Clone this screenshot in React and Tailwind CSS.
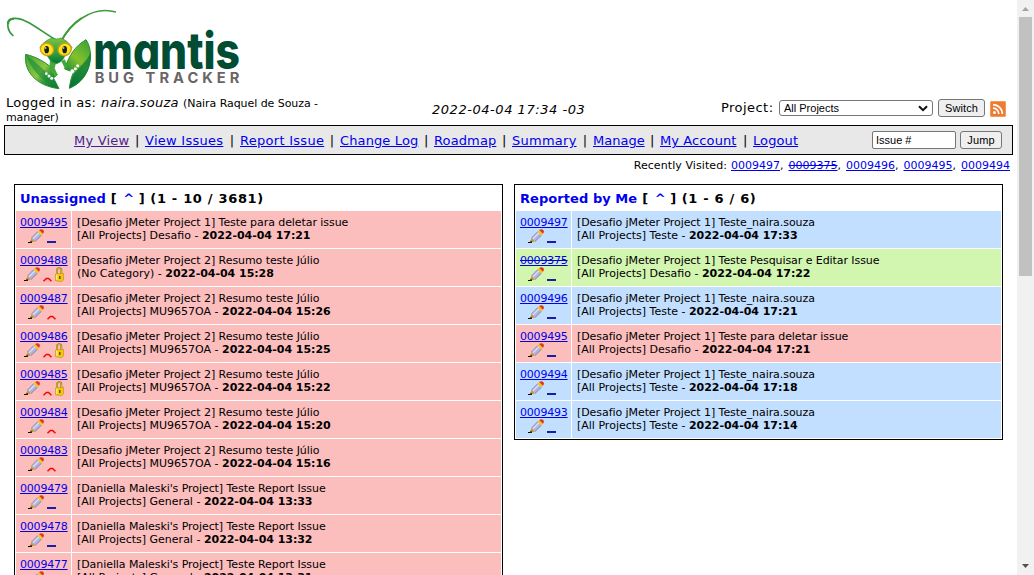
import React from 'react';

const unassigned = [
  ['0009495', '[Desafio jMeter Project 1] Teste para deletar issue', '[All Projects] Desafio', '2022-04-04 17:21', 'normal'],
  ['0009488', '[Desafio jMeter Project 2] Resumo teste Júlio', '(No Category)', '2022-04-04 15:28', 'high', true],
  ['0009487', '[Desafio jMeter Project 2] Resumo teste Júlio', '[All Projects] MU9657OA', '2022-04-04 15:26', 'high'],
  ['0009486', '[Desafio jMeter Project 2] Resumo teste Júlio', '[All Projects] MU9657OA', '2022-04-04 15:25', 'high', true],
  ['0009485', '[Desafio jMeter Project 2] Resumo teste Júlio', '[All Projects] MU9657OA', '2022-04-04 15:22', 'high', true],
  ['0009484', '[Desafio jMeter Project 2] Resumo teste Júlio', '[All Projects] MU9657OA', '2022-04-04 15:20', 'high'],
  ['0009483', '[Desafio jMeter Project 2] Resumo teste Júlio', '[All Projects] MU9657OA', '2022-04-04 15:16', 'high'],
  ['0009479', "[Daniella Maleski's Project] Teste Report Issue", '[All Projects] General', '2022-04-04 13:33', 'normal'],
  ['0009478', "[Daniella Maleski's Project] Teste Report Issue", '[All Projects] General', '2022-04-04 13:32', 'normal'],
  ['0009477', "[Daniella Maleski's Project] Teste Report Issue", '[All Projects] General', '2022-04-04 13:31', 'normal'],
].map(([id, title, category, date, priority, locked]) => ({ id, title, category, date, priority, locked, color: 'bg-[#fcbdbd]' }));

const reported = [
  { id: '0009497', title: '[Desafio jMeter Project 1] Teste_naira.souza', category: '[All Projects] Teste', date: '2022-04-04 17:33', color: 'bg-[#c2dfff]' },
  { id: '0009375', title: '[Desafio jMeter Project 1] Teste Pesquisar e Editar Issue', category: '[All Projects] Desafio', date: '2022-04-04 17:22', color: 'bg-[#d2f5b0]', resolved: true },
  { id: '0009496', title: '[Desafio jMeter Project 1] Teste_naira.souza', category: '[All Projects] Teste', date: '2022-04-04 17:21', color: 'bg-[#c2dfff]' },
  { id: '0009495', title: '[Desafio jMeter Project 1] Teste para deletar issue', category: '[All Projects] Desafio', date: '2022-04-04 17:21', color: 'bg-[#fcbdbd]' },
  { id: '0009494', title: '[Desafio jMeter Project 1] Teste_naira.souza', category: '[All Projects] Teste', date: '2022-04-04 17:18', color: 'bg-[#c2dfff]' },
  { id: '0009493', title: '[Desafio jMeter Project 1] Teste_naira.souza', category: '[All Projects] Teste', date: '2022-04-04 17:14', color: 'bg-[#c2dfff]' },
];

const menu = [
  ['My View', 'w-[71px] tracking-[0.2px]', 'text-[#551a8b]'],
  ['View Issues', 'w-[95px] tracking-[0.27px]', 'text-[#0000ee]'],
  ['Report Issue', 'w-[100px] tracking-[0.28px]', 'text-[#0000ee]'],
  ['Change Log', 'w-[94px] tracking-[0.12px]', 'text-[#0000ee]'],
  ['Roadmap', 'w-[78px] tracking-[0.12px]', 'text-[#0000ee]'],
  ['Summary', 'w-[81px] tracking-[0.25px]', 'text-[#0000ee]'],
  ['Manage', 'w-[67px]', 'text-[#0000ee]'],
  ['My Account', 'w-[93px] tracking-[0.1px]', 'text-[#0000ee]'],
  ['Logout', 'w-[46px] tracking-[0.1px]', 'text-[#0000ee]'],
];

const visited = ['0009497', '0009375', '0009496', '0009495', '0009494'];

function Logo() {
  return (
    <svg className="block h-[95px] w-[260px] shrink-0" viewBox="0 0 780 285">
      <defs>
        <linearGradient id="armL" x1="0" y1="0" x2="1" y2="0.9">
          <stop offset="0" stopColor="#3fa535" />
          <stop offset="0.5" stopColor="#8cc63f" />
          <stop offset="0.7" stopColor="#2f9a3a" />
          <stop offset="1" stopColor="#00702f" />
        </linearGradient>
        <linearGradient id="armR" x1="0.8" y1="0" x2="0.3" y2="1">
          <stop offset="0" stopColor="#3fa535" />
          <stop offset="0.45" stopColor="#86c12c" />
          <stop offset="0.7" stopColor="#3a9d35" />
          <stop offset="1" stopColor="#006b2d" />
        </linearGradient>
        <linearGradient id="head" x1="0" y1="0" x2="0" y2="1">
          <stop offset="0" stopColor="#7cc242" />
          <stop offset="0.6" stopColor="#2f9e3c" />
          <stop offset="1" stopColor="#007536" />
        </linearGradient>
      </defs>
      <path d="M40 108C20 90 17 62 38 56C75 47 135 105 180 126" fill="none" stroke="#35983c" strokeWidth="5" />
      <path d="M25 72C22 62 30 55 42 56" fill="none" stroke="#35983c" strokeWidth="6" />
      <path d="M182 126C208 76 272 14 348 36" fill="none" stroke="#3f9b3c" strokeWidth="4.5" />
      <path d="M182 126C195 101 217 72 245 54" fill="none" stroke="#3f9b3c" strokeWidth="6" />
      <path d="M77 163C70 212 108 258 177 266C170 252 165 242 160 234L172 224L156 204C135 186 108 170 77 163Z" fill="url(#armL)" stroke="#2f8f34" strokeWidth="3" />
      <path d="M77 163C92 205 122 245 177 266C164 240 137 212 77 163Z" fill="#19883a" opacity="0.6" />
      <path d="M150 178L168 190L164 205L173 224L166 230L148 208Z" fill="#46ab38" />
      <path d="M258 119C284 156 275 238 208 265C211 245 214 230 220 219L208 212L194 207C206 168 225 138 258 119Z" fill="url(#armR)" stroke="#2f8f34" strokeWidth="3" />
      <path d="M272 157C276 205 252 248 208 265C211 243 218 225 236 206C250 190 264 177 272 157Z" fill="#07783a" opacity="0.75" />
      <path d="M184 184L194 178L203 198L196 208Z" fill="#3fa93a" />
      <g fill="#fff">
        <circle cx="139" cy="221" r="4" />
        <circle cx="147" cy="228" r="4.5" />
        <circle cx="155" cy="235" r="4.5" />
        <circle cx="233" cy="197" r="4.5" />
        <circle cx="226" cy="206" r="4.5" />
        <circle cx="217" cy="214" r="6" />
      </g>
      <path d="M120 142C130 126 146 117 156 114C164 118 174 118 181 114C194 118 207 127 216 143C212 157 203 166 194 169C190 180 181 188 170 191C156 188 148 180 143 169C131 164 123 155 120 142Z" fill="url(#head)" stroke="#2d9237" strokeWidth="2" />
      <ellipse cx="141" cy="148" rx="20" ry="18" fill="#fde616" stroke="#d89b18" strokeWidth="4" transform="rotate(25 141 148)" />
      <ellipse cx="194" cy="148" rx="20" ry="18" fill="#fde616" stroke="#d89b18" strokeWidth="4" transform="rotate(-25 194 148)" />
      <ellipse cx="140" cy="149" rx="7" ry="11" fill="#17201a" />
      <ellipse cx="194" cy="149" rx="7" ry="11" fill="#17201a" />
      <circle cx="137" cy="144" r="2.5" fill="#fff" />
      <circle cx="191" cy="144" r="2.5" fill="#fff" />
      <text x="280" y="208" textLength="440" lengthAdjust="spacingAndGlyphs" className="[font-feature-settings:'cv11'] font-[Inter,sans-serif] text-[152px] font-extrabold" fill="#004d33">mantis</text>
      <text x="284" y="248" textLength="434" className="font-[Inter,sans-serif] text-[44px] font-bold" fill="#6a6565">BUG TRACKER</text>
    </svg>
  );
}

function Pencil() {
  return (
    <svg className="h-[15px] w-4 shrink-0" viewBox="0 0 16 15">
      <path d="M0 13.5H4" stroke="#000" strokeWidth="1" />
      <path d="M2.4 13.4L3.4 8.8L7.2 12.4Z" fill="#c99a2a" />
      <path d="M2 13.8L2.7 11.6L4.2 13Z" fill="#2b1c04" />
      <path d="M3.3 9L9.6 2.4L13.6 6.2L7 12.6Z" fill="#b3b4de" />
      <path d="M3.4 9L9.6 2.5" stroke="#85889f" strokeWidth="0.7" />
      <path d="M7 12.5L13.5 6.2" stroke="#74769c" strokeWidth="0.8" />
      <path d="M5.2 9.6L11 3.9" stroke="#dfe0fa" strokeWidth="1.3" />
      <path d="M9.4 2.6L11.2 0.9L15 4.6L13.3 6.4Z" fill="#f7c51d" />
      <path d="M11.1 1.1C12.4 -0.3 14.6 0 15.5 1.2C16.2 2.3 15.9 3.8 14.9 4.8Z" fill="#dc3a20" />
    </svg>
  );
}

function Lock() {
  return (
    <svg className="h-[15px] w-[9px] shrink-0" viewBox="0 0 9 15">
      <path d="M2 8V3.2C2 0.4 6.3 0.4 6.3 3.2V7" fill="none" stroke="#9a7410" strokeWidth="1.9" />
      <path d="M2 8V3.2C2 0.8 6.3 0.8 6.3 3.2V7" fill="none" stroke="#e8d060" strokeWidth="0.8" />
      <path d="M0.5 7L8.5 6.4V13L6.5 14.5L0.5 13.8Z" fill="#f4c80e" stroke="#c8960a" strokeWidth="0.7" />
      <path d="M1.8 7.6V13" stroke="#fff08a" strokeWidth="1.2" />
      <path d="M4.8 9V12" stroke="#5c4300" strokeWidth="1.4" />
    </svg>
  );
}

function Priority({ level }) {
  if (level === 'high') {
    return (
      <svg className="h-[5px] w-[9px] shrink-0" viewBox="0 0 9 5">
        <path d="M0.5 4.2L3.4 1.5H5.6L8.5 4.2" fill="none" stroke="#ff0000" strokeWidth="1.5" />
      </svg>
    );
  }
  return <span className="mb-px h-[2px] w-[9px] shrink-0 bg-[#1c1ca8]" />;
}

function Issue({ id, title, category, date, priority = 'normal', locked, color, resolved }) {
  return (
    <li className="flex h-[37px] shrink-0 gap-px">
      <div className={`flex w-[55px] flex-col pt-[5px] pl-1 ${color}`}>
        <a className={`tracking-[-0.2px] text-[#0000ee] ${resolved ? '[text-decoration-line:underline_line-through]' : 'underline'}`}>{id}</a>
        <div className={`flex h-[15px] items-end gap-[3px] ${locked ? 'pl-[4px]' : 'pl-[8px]'}`}>
          <Pencil />
          <Priority level={priority} />
          {locked && <Lock />}
        </div>
      </div>
      <div className={`flex grow flex-col pt-[5px] pl-[5px] ${color}`}>
        <span className="tracking-[-0.07px]">{title}</span>
        <span>
          {category} - <b className="tracking-[-0.04px]">{date}</b>
        </span>
      </div>
    </li>
  );
}

function Panel({ title, range, issues }) {
  return (
    <section className="w-[489px] border border-black p-px">
      <h2 className="flex h-[25px] pt-[5px] pl-1 text-[13px] leading-4 font-bold">
        <a className="mr-[5px] tracking-[0.06px] text-[#0000ee]">{title}</a>
        <span className="w-[12.5px]">[</span>
        <a className="w-[15.5px] text-[#0000ee]">^</a>
        <span className="w-[11.5px]">]</span>
        <span className="tracking-[0.68px]">{range}</span>
      </h2>
      <ul className="flex flex-col gap-px text-[11px] leading-[13px]">
        {issues.map((issue) => (
          <Issue key={issue.id} {...issue} />
        ))}
      </ul>
    </section>
  );
}

function Button({ children, className }) {
  return (
    <button className={`h-[18px] rounded-[3px] border border-[#767676] bg-[#efefef] text-center font-['Liberation_Sans',Arial,sans-serif] text-[11px] leading-4 tracking-[0.1px] ${className}`}>
      {children}
    </button>
  );
}

function Rss() {
  return (
    <svg className="ml-[5px] h-4 w-4" viewBox="0 0 16 16">
      <rect width="16" height="16" rx="2" fill="#ee7b30" />
      <rect x="0.5" y="0.5" width="15" height="15" rx="1.5" fill="none" stroke="#f39a5a" />
      <circle cx="4.5" cy="11.5" r="1.5" fill="#fff" />
      <path d="M3 7.2A5.8 5.8 0 0 1 8.8 13M3 3.6A9.4 9.4 0 0 1 12.4 13" fill="none" stroke="#fff" strokeWidth="1.7" />
    </svg>
  );
}

function Scrollbar() {
  return (
    <div className="flex w-[17px] shrink-0 flex-col items-center bg-[#f1f1f1]">
      <svg className="h-[17px] w-[17px]" viewBox="0 0 17 17">
        <path d="M5 11L8.5 7L12 11Z" fill="#a3a3a3" />
      </svg>
      <div className="h-[259px] w-[13px] bg-[#c1c1c1]" />
      <svg className="mt-auto h-[17px] w-[17px]" viewBox="0 0 17 17">
        <path d="M5 6L8.5 10L12 6Z" fill="#505050" />
      </svg>
    </div>
  );
}

export default function App() {
  return (
    <div className="flex h-[575px] w-[1034px] overflow-hidden bg-white font-['DejaVu_Sans',Verdana,sans-serif] text-black">
      <div className="flex w-[1017px] flex-col whitespace-nowrap">
        <Logo />
        <header className="flex h-[30px] shrink-0 pl-[6px]">
          <div className="w-[426px]">
            <div className="flex h-[15px] items-baseline">
              <span className="w-[95px] text-[13px] leading-[15px] tracking-[0.25px]">Logged in as:</span>
              <span className="w-[82px] text-[13px] leading-[15px] tracking-[0.25px] italic">naira.souza</span>
              <span className="text-[11px] leading-[15px] tracking-[-0.06px]">(Naira Raquel de Souza -</span>
            </div>
            <div className="pt-px text-[11px] leading-[14px] tracking-[-0.15px]">manager)</div>
          </div>
          <div className="w-[289px] pt-[7px] text-[13px] leading-[15px] tracking-[0.54px] italic">2022-04-04 17:34 -03</div>
          <div className="flex pt-[4px]">
            <label className="w-[58px] pt-px text-[13px] leading-[15px] tracking-[0.45px]">Project:</label>
            <div className="mt-px flex h-4 w-[154px] items-center justify-between rounded-[3px] border border-[#767676] bg-white pr-1 pl-1 font-['Liberation_Sans',Arial,sans-serif] text-[11px] leading-[14px]">
              All Projects
              <svg className="h-[7px] w-[10px]" viewBox="0 0 10 7">
                <path d="M1 1.2L5 5.2L9 1.2" fill="none" stroke="#111" strokeWidth="2" />
              </svg>
            </div>
            <Button className="ml-[5px] w-[47px]">Switch</Button>
            <div className="pt-[2px]">
              <Rss />
            </div>
          </div>
        </header>
        <nav className="ml-1 flex h-[30px] w-[1009px] shrink-0 items-center border border-black bg-[#e8e8e8] pl-[69px]">
          <ul className="flex w-[798px] pt-[2px] text-[13px] leading-4">
            {menu.map(([label, box, color], i) => (
              <li key={label} className={`flex shrink-0 ${box}`}>
                <a className={`underline ${color}`}>{label}</a>
                {i < menu.length - 1 && <span className="mr-[5.5px] ml-auto">|</span>}
              </li>
            ))}
          </ul>
          <input readOnly value="Issue #" className="h-[18px] w-[84px] rounded-[2px] border border-[#767676] bg-white px-[3px] font-['Liberation_Sans',Arial,sans-serif] text-[11px]" />
          <Button className="ml-1 w-[42px]">Jump</Button>
        </nav>
        <div className="flex h-[29px] w-[1010px] shrink-0 justify-end pt-[4px] text-[11px] leading-[14px]">
          <span className="mr-1 tracking-[0.08px]">Recently Visited:</span>
          {visited.map((id, i) => (
            <span key={id} className={i < visited.length - 1 ? 'w-[57.5px]' : 'w-[49px]'}>
              <a className={`text-[#0000ee] ${id === '0009375' ? '[text-decoration-line:underline_line-through]' : 'underline'}`}>{id}</a>
              {i < visited.length - 1 && ','}
            </span>
          ))}
        </div>
        <main className="flex items-start gap-[11px] pl-[14px]">
          <Panel title="Unassigned" range="(1 - 10 / 3681)" issues={unassigned} />
          <Panel title="Reported by Me" range="(1 - 6 / 6)" issues={reported} />
        </main>
      </div>
      <Scrollbar />
    </div>
  );
}
